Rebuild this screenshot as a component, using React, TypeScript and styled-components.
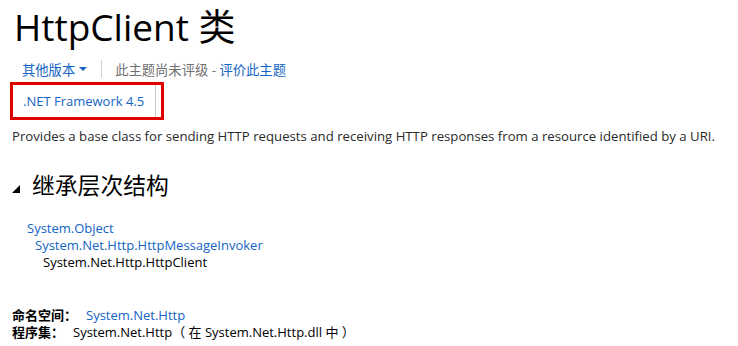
import * as React from "react"
import styled, { createGlobalStyle } from "styled-components"

const GlobalStyle = createGlobalStyle`
    html, body {
        margin: 0;
        padding: 0;
        background: #fff;
    }
    body {
        font-family: "Open Sans", "Noto Sans CJK SC", sans-serif;
        color: #2a2a2a;
    }
`;

const hierarchy = [
    { name: "System.Object", link: true },
    { name: "System.Net.Http.HttpMessageInvoker", link: true },
    { name: "System.Net.Http.HttpClient", link: false },
]

const App = () => {
    return (
        <Page>
            <GlobalStyle />
            <Title>HttpClient 类</Title>
            <Nav>
                <NavLink>其他版本 <Caret /></NavLink>
                <Divider />
                <Rating>此主题尚未评级 - <NavLink>评价此主题</NavLink></Rating>
            </Nav>
            <VersionBox>
                <VersionTab>.NET Framework 4.5</VersionTab>
            </VersionBox>
            <Summary>
                Provides a base class for sending HTTP requests and receiving HTTP responses from a resource identified by a URI.
            </Summary>
            <SectionHeading>
                <Toggle />
                继承层次结构
            </SectionHeading>
            <Hierarchy>
                {hierarchy.map((item, i) => (
                    <HierarchyItem key={item.name} $level={i} $link={item.link}>
                        {item.name}
                    </HierarchyItem>
                ))}
            </Hierarchy>
            <Meta>
                <MetaRow>
                    <Label>命名空间：</Label>
                    <Link $gap={9}>System.Net.Http</Link>
                </MetaRow>
                <MetaRow>
                    <Label>程序集：</Label>
                    <Value $gap={9}>System.Net.Http（ 在 System.Net.Http.dll 中 ）</Value>
                </MetaRow>
            </Meta>
        </Page>
    )
}
export default App

const Page = styled.div`
    width: 738px;
    height: 346px;
    overflow: hidden;
    padding: 0 12px;
    box-sizing: border-box;
    display: flex;
    flex-direction: column;
    align-items: flex-start;
    font-size: 13px;
`;

const Title = styled.h1`
    margin: 3px 0 0 2px;
    font-size: 37px;
    font-weight: 400;
    line-height: 48px;
    color: #000;
`;

const Nav = styled.div`
    display: flex;
    align-items: center;
    margin: 9px 0 0 10px;
    height: 18px;
    font-size: 13.3px;
    color: #707070;
`;

const NavLink = styled.span`
    color: #1364c4;
    display: inline-flex;
    align-items: center;
`;

const Caret = styled.span`
    display: inline-block;
    margin-left: 4px;
    width: 0;
    height: 0;
    border-left: 4px solid transparent;
    border-right: 4px solid transparent;
    border-top: 4px solid #1364c4;
`;

const Divider = styled.span`
    width: 1px;
    height: 18px;
    background: #d0d0d0;
    margin: 0 13px 0 14px;
`;

const Rating = styled.span`
    display: inline-flex;
    align-items: center;
    white-space: pre;
`;

const VersionBox = styled.div`
    margin: 4px 0 0 -2px;
    width: 154px;
    height: 38px;
    box-sizing: border-box;
    border: 3px solid #e00000;
    display: flex;
`;

const VersionTab = styled.div`
    flex: 1;
    margin-right: 5px;
    border-right: 1px solid #c8c8c8;
    padding-left: 10px;
    display: flex;
    align-items: center;
    color: #1364c4;
    font-size: 13px;
`;

const Summary = styled.p`
    margin: 7px 0 0;
    font-size: 13.2px;
    line-height: 18px;
    color: #2a2a2a;
    white-space: nowrap;
`;

const SectionHeading = styled.h2`
    margin: 25px 0 0;
    display: flex;
    align-items: center;
    font-size: 22.8px;
    font-weight: 400;
    line-height: 32px;
    color: #000;
`;

const Toggle = styled.span`
    width: 0;
    height: 0;
    margin: 6px 12px 0 0;
    border-left: 8px solid transparent;
    border-bottom: 8px solid #000;
`;

const Hierarchy = styled.div`
    margin: 18px 0 0;
    display: flex;
    flex-direction: column;
`;

const HierarchyItem = styled.div<{ $level: number; $link: boolean }>`
    padding-left: ${p => 15 + p.$level * 8}px;
    line-height: 17px;
    color: ${p => p.$link ? "#1364c4" : "#000"};
`;

const Meta = styled.div`
    margin-top: 36px;
    display: flex;
    flex-direction: column;
`;

const MetaRow = styled.div`
    display: flex;
    line-height: 17px;
    color: #000;
    white-space: pre;
`;

const Label = styled.span`
    font-weight: 700;
`;

const Value = styled.span<{ $gap: number }>`
    margin-left: ${p => p.$gap}px;
`;

const Link = styled(Value)`
    color: #1364c4;
`;
